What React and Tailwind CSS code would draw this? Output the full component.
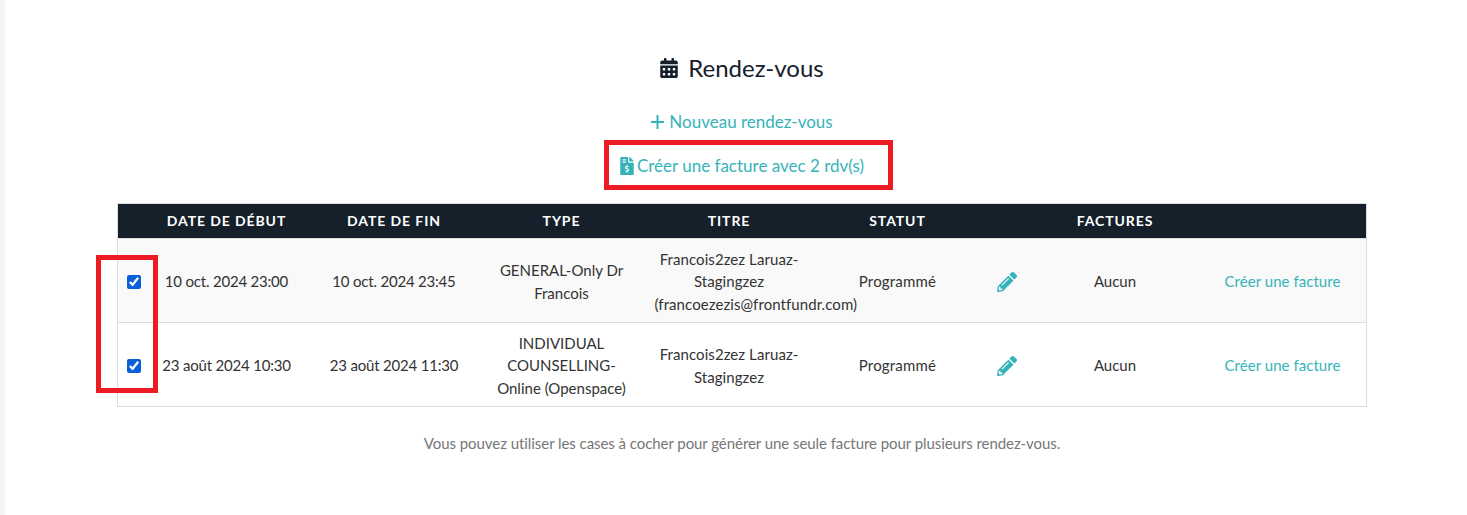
import { FaCalendarAlt, FaFileInvoiceDollar, FaPencilAlt } from 'react-icons/fa';

const rows = [
  {
    start: '10 oct. 2024 23:00',
    end: '10 oct. 2024 23:45',
    type: 'GENERAL-Only Dr Francois',
    title: ['Francois2zez Laruaz-Stagingzez', '(francoezezis@frontfundr.com)'],
    bg: 'bg-[#f9f9f9]',
  },
  {
    start: '23 août 2024 10:30',
    end: '23 août 2024 11:30',
    type: 'INDIVIDUAL COUNSELLING-Online (Openspace)',
    title: ['Francois2zez Laruaz-Stagingzez'],
    bg: 'bg-white',
  },
];

const headers = ['', 'Date de début', 'Date de fin', 'Type', 'Titre', 'Statut', '', 'Factures', ''];

export default function App() {
  return (
    <div className="relative flex h-[515px] overflow-hidden bg-white font-['Lato','Liberation_Sans',sans-serif] text-[15px] text-[#333]">
      <div className="w-[5px] shrink-0 bg-[#f3f4f4]" />

      <main className="w-[1250px] ml-[112px] pt-[53px]">
        {/* Entête */}
        <h1 className="flex h-[30px] items-center justify-center gap-[10px] text-2xl leading-[30px] text-[#15202b]">
          <FaCalendarAlt className="h-[20px] w-[18px]" />
          Rendez-vous
        </h1>

        <div className="mt-[28px] flex flex-col items-center gap-[22px] text-[17px] leading-[22px] text-[#36b3ba]">
          <a className="flex items-center gap-[5px]">
            <svg width="13" height="14" viewBox="0 0 13 14" fill="currentColor">
              <rect x="5.5" y="0" width="2" height="14" />
              <rect x="0" y="6" width="13" height="2" />
            </svg>
            Nouveau rendez-vous
          </a>
          <a className="flex items-center gap-[3px]">
            <FaFileInvoiceDollar className="h-[18px] w-[14px]" />
            Créer une facture avec 2 rdv(s)
          </a>
        </div>

        <table className="mt-[26px] w-[1250px] table-fixed border-collapse border border-[#dddddd]">
          <colgroup>
            <col className="w-[33px]" />
            <col className="w-[152px]" />
            <col className="w-[183px]" />
            <col className="w-[152px]" />
            <col className="w-[183px]" />
            <col className="w-[154px]" />
            <col className="w-[64px]" />
            <col className="w-[153px]" />
            <col />
          </colgroup>
          <thead>
            <tr className="h-[35px] bg-[#15202b] text-white">
              {headers.map((label, i) => (
                <th key={i} className="whitespace-nowrap text-center text-sm font-bold uppercase tracking-[0.9px]">
                  {label}
                </th>
              ))}
            </tr>
          </thead>
          <tbody>
            {rows.map((row) => (
              <tr
                key={row.start}
                className={`h-[84px] border-t border-[#dddddd] text-center leading-[22.5px] [&>td]:pt-[2px] ${row.bg}`}
              >
                <td className="pr-[1px]">
                  <input
                    type="checkbox"
                    defaultChecked
                    className="mx-auto block h-[14px] w-[14px] accent-[#0a5fdb]"
                  />
                </td>
                <td className="whitespace-nowrap tracking-[-0.2px]">{row.start}</td>
                <td className="whitespace-nowrap tracking-[-0.2px]">{row.end}</td>
                <td className="px-[10px]">{row.type}</td>
                <td className="px-[17px] tracking-[0.07px]">
                  {row.title.map((line) => (
                    <div key={line}>{line}</div>
                  ))}
                </td>
                <td className="whitespace-nowrap tracking-[0.2px]">Programmé</td>
                <td>
                  <FaPencilAlt className="mx-auto text-[20px] text-[#36b3ba]" />
                </td>
                <td>Aucun</td>
                <td className="whitespace-nowrap pl-[33px] text-left tracking-[0.05px] text-[#36b3ba]">Créer une facture</td>
              </tr>
            ))}
          </tbody>
        </table>

        <p className="mt-[25px] text-center tracking-[-0.06px] text-[#777]">
          Vous pouvez utiliser les cases à cocher pour générer une seule facture pour plusieurs rendez-vous.
        </p>
      </main>

      {/* Annotations rouges */}
      <div className="absolute left-[604px] top-[140px] h-[50px] w-[289px] border-[5px] border-[#ed1c24]" />
      <div className="absolute left-[96px] top-[255px] h-[138px] w-[62px] border-[5px] border-[#ed1c24]" />
    </div>
  );
}
